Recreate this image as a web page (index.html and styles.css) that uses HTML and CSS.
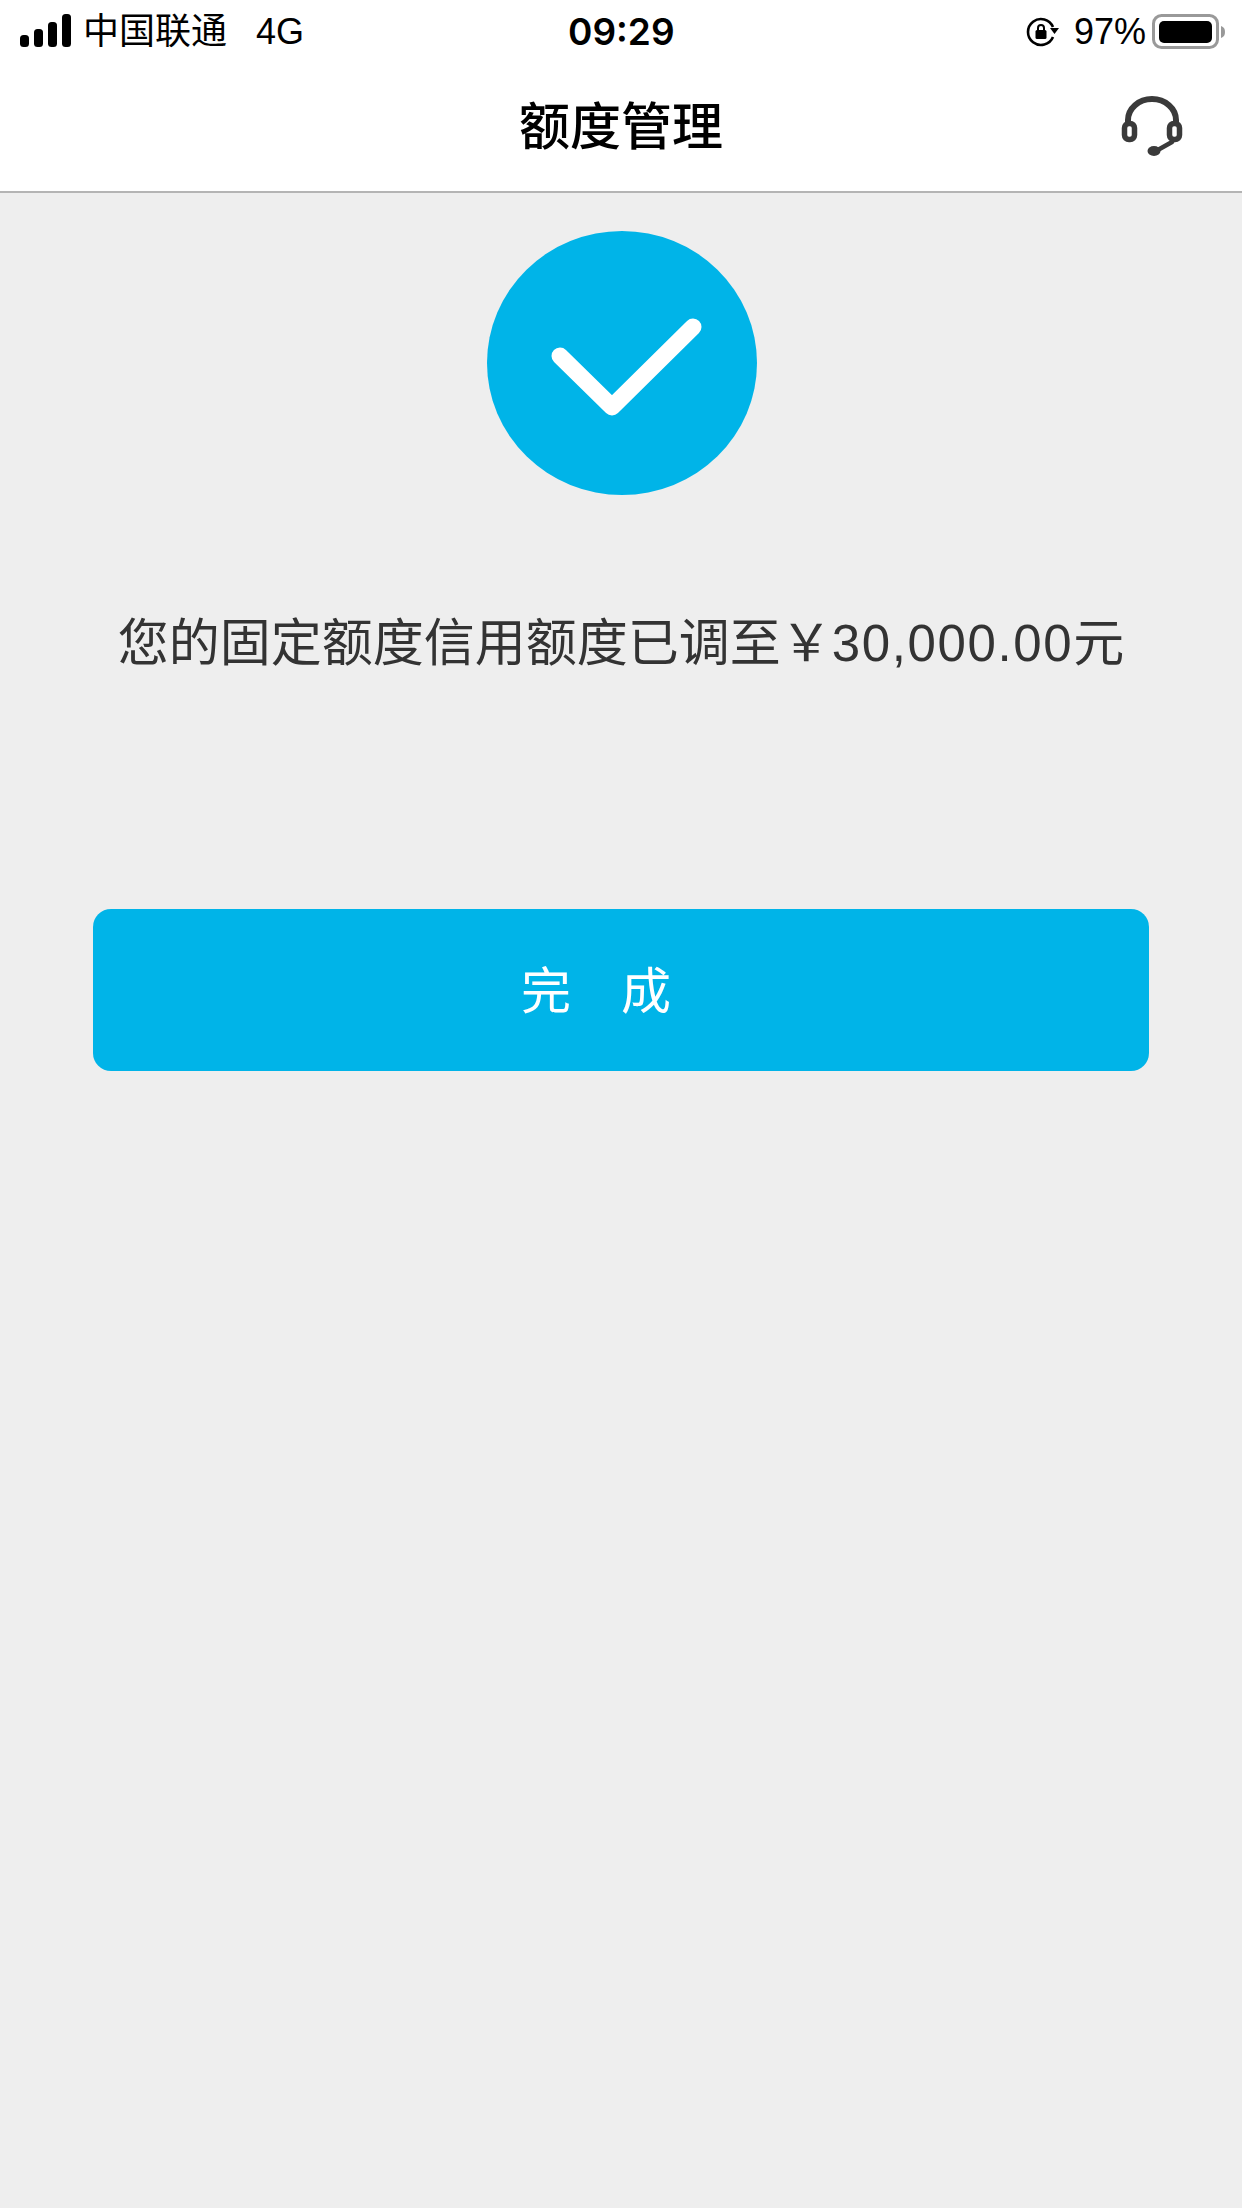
FILE: index.html
```html
<!DOCTYPE html>
<html lang="zh-CN">
<head>
<meta charset="utf-8">
<title>额度管理</title>
<link rel="stylesheet" href="styles.css">
</head>
<body>
<header class="top">
  <div class="status">
    <div class="status-left">
      <svg class="signal" width="52" height="34" viewBox="0 0 52 34"><g fill="#000"><rect x="0" y="21" width="9" height="12" rx="3.5"/><rect x="14" y="15" width="9" height="18" rx="3.5"/><rect x="28" y="8" width="9" height="25" rx="3.5"/><rect x="42" y="0" width="9" height="33" rx="3.5"/></g></svg>
      <span class="carrier">中国联通</span>
      <span class="net">4G</span>
    </div>
    <div class="clock">09:29</div>
    <div class="status-right">
      <svg class="lock" width="34" height="30" viewBox="0 0 34 30"><path d="M27 20A13 13 0 1 1 27 10" fill="none" stroke="#000" stroke-width="2.6"/><path d="M24 11h9l-4.500 6z" fill="#000"/><rect x="9.500" y="13" width="11" height="9" rx="1.500" fill="#000"/><path d="M12 13.500v-2.500a3 3 0 0 1 6 0v2.500" fill="none" stroke="#000" stroke-width="2"/></svg>
      <span class="pct">97%</span>
      <svg class="battery" width="76" height="36" viewBox="0 0 76 36"><rect x="1.500" y="1.500" width="64" height="32" rx="8" fill="none" stroke="#999" stroke-width="3"/><rect x="7" y="7" width="53" height="22" rx="5" fill="#000"/><path d="M69 12c3 1 4 3 4 6s-1 5-4 6z" fill="#999"/></svg>
    </div>
  </div>
  <div class="nav">
    <h1 class="title">额度管理</h1>
    <svg class="headset" width="62" height="66" viewBox="0 0 62 66"><g fill="none" stroke="#3a3a3a" stroke-linecap="round"><path d="M7 30V27a24 21 0 0 1 48 0v3" stroke-width="6"/><rect x="3.500" y="30.500" width="10" height="16" rx="4.500" stroke-width="5.500"/><rect x="48.500" y="30.500" width="10" height="16" rx="4.500" stroke-width="5.500"/><path d="M51 49L35 58" stroke-width="4.500"/></g><ellipse cx="33" cy="58" rx="6.500" ry="5" fill="#3a3a3a"/></svg>
  </div>
</header>
<main class="content">
  <div class="tick">
    <svg width="270" height="264" viewBox="0 0 270 264"><ellipse cx="135" cy="132" rx="135" ry="132" fill="#00b4e8"/><path d="M73 125L125 176L206 96" fill="none" stroke="#fff" stroke-width="17" stroke-linecap="round" stroke-linejoin="round"/></svg>
  </div>
  <p class="message">您的固定额度信用额度已调至￥<span class="amount">30,000.00</span>元</p>
  <button class="done" type="button"><span>完</span><span>成</span></button>
</main>
</body>
</html>
```
FILE: styles.css
```css
* { box-sizing: border-box; }
html, body { margin: 0; padding: 0; }
body {
  width: 1242px;
  height: 2208px;
  background: #eeeeee;
  font-family: "Liberation Sans", "Noto Sans CJK SC", sans-serif;
  overflow: hidden;
}
.top {
  height: 193px;
  background: #fff;
  border-bottom: 2px solid #b4b4b4;
}
.status {
  height: 64px;
  display: flex;
  align-items: center;
  justify-content: space-between;
  padding: 0 14px 0 20px;
  position: relative;
  color: #000;
  font-size: 36px;
}
.status-left, .status-right { display: flex; align-items: center; }
.signal { margin-right: 11px; margin-top: -2px; }
.carrier { font-family: "Noto Sans CJK SC", sans-serif; line-height: 1; margin-top: -8px; }
.net { margin-left: 29px; }
.clock {
  position: absolute;
  left: 568px;
  top: 10px;
  font-family: Inter, "Liberation Sans", sans-serif;
  font-weight: 600;
  font-size: 37px;
  line-height: 44px;
}
.lock { margin-right: 14px; }
.pct { margin-right: 6px; }
.nav {
  height: 127px;
  display: flex;
  align-items: center;
  justify-content: center;
  position: relative;
}
.title {
  margin: 0 0 10px;
  font-family: "Noto Sans CJK SC", sans-serif;
  font-size: 51px;
  font-weight: 500;
  color: #000;
}
.headset { position: absolute; left: 1121px; top: 29px; }
.content { display: flex; flex-direction: column; align-items: center; }
.tick { margin: 38px 0 0 1px; height: 264px; line-height: 0; }
.message {
  margin: 113px 0 0;
  font-family: "Liberation Sans", "Noto Sans CJK SC", sans-serif;
  font-size: 51px;
  line-height: 72px;
  color: #333;
  white-space: nowrap;
}
.amount { letter-spacing: 1.6px; }
.done {
  margin-top: 229px;
  width: 1056px;
  height: 162px;
  border: 0;
  border-radius: 18px;
  background: #00b4e8;
  color: #fff;
  font-family: "Noto Sans CJK SC", sans-serif;
  font-size: 50px;
  display: flex;
  align-items: center;
  justify-content: center;
  gap: 50px;
  padding: 0 50px 6px 0;
}
```
